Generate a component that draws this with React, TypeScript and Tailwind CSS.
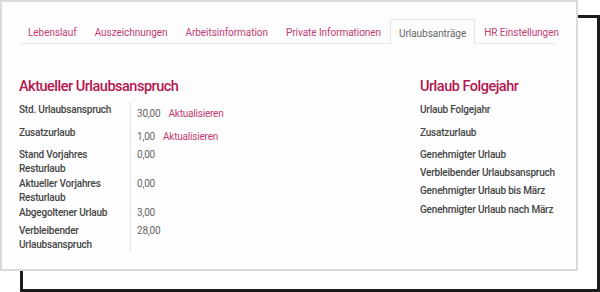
import React from "react";

const tabs = [
  "Lebenslauf",
  "Auszeichnungen",
  "Arbeitsinformation",
  "Private Informationen",
  "Urlaubsanträge",
  "HR Einstellungen",
];

type Row = { label: string[]; value: string; link?: boolean; h: string };

const rows: Row[] = [
  { label: ["Std. Urlaubsanspruch"], value: "30,00", link: true, h: "h-[23px]" },
  { label: ["Zusatzurlaub"], value: "1,00", link: true, h: "h-[22px]" },
  { label: ["Stand Vorjahres", "Resturlaub"], value: "0,00", h: "h-[29px]" },
  { label: ["Aktueller Vorjahres", "Resturlaub"], value: "0,00", h: "h-[29px]" },
  { label: ["Abgegoltener Urlaub"], value: "3,00", h: "h-[18px]" },
  { label: ["Verbleibender", "Urlaubsanspruch"], value: "28,00", h: "h-[29px]" },
];

const nextYear = [
  { label: "Urlaub Folgejahr", h: "h-[23px]" },
  { label: "Zusatzurlaub", h: "h-[22px]" },
  { label: "Genehmigter Urlaub", h: "h-[18px]" },
  { label: "Verbleibender Urlaubsanspruch", h: "h-[18px]" },
  { label: "Genehmigter Urlaub bis März", h: "h-[19px]" },
  { label: "Genehmigter Urlaub nach März", h: "h-[18px]" },
];

const App = () => {
  return (
    <div className="relative w-[600px] h-[292px] bg-white font-['Roboto',sans-serif]">
      {/* black frame behind the card */}
      <div className="absolute left-[20px] top-[15px] w-[580px] h-[277px] border-[3px] border-[#1c1c1c]" />
      <div className="relative w-[578px] h-[271px] border-2 border-[#dadada] bg-[#fdfdfd] pl-[17px] pr-[19px] pt-[17px]">
        <div className="flex h-[25px] border-b border-[#ececec] whitespace-nowrap">
          {tabs.map((tab) => {
            const active = tab === "Urlaubsanträge";
            return (
              <div
                key={tab}
                className={
                  active
                    ? "h-[25px] -mb-px px-[8px] pt-[7px] border border-b-0 border-[#e3e3e3] rounded-t-[3px] bg-[#fdfdfd] text-[10px] leading-[14px] tracking-[-0.05px] text-[#666]"
                    : "h-[25px] px-[9px] pt-[7px] text-[10px] leading-[14px] tracking-[-0.05px] text-[#c23b73]"
                }
              >
                {tab}
              </div>
            );
          })}
        </div>

        <div className="flex mt-[33px] whitespace-nowrap">
          <div className="w-[401px] shrink-0">
            <h2 className="text-[14.5px] leading-[20px] font-medium tracking-[-0.5px] text-[#b3174f] mb-[6px]">
              Aktueller Urlaubsanspruch
            </h2>
            <div className="flex">
              <div className="w-[111px] text-[10px] leading-[14px] font-medium tracking-[-0.2px] text-[#454545]">
                {rows.map((r, i) => (
                  <div key={i} className={r.h}>
                    {r.label.map((l) => (
                      <div key={l}>{l}</div>
                    ))}
                  </div>
                ))}
              </div>
              <div className="w-px bg-[#e6e6e6] -mt-[1px] h-[150px]" />
              <div className="pl-[6px] text-[10px] leading-[14px] tracking-[-0.2px] text-[#666]">
                {rows.map((r, i) => (
                  <div key={i} className={r.h + " flex"}>
                    {r.link ? (
                      <div className="flex items-center h-[22px]">
                        <span>{r.value}</span>
                        <span className="ml-[8px] text-[#c23b73]">Aktualisieren</span>
                      </div>
                    ) : (
                      <span>{r.value}</span>
                    )}
                  </div>
                ))}
              </div>
            </div>
          </div>
          <div>
            <h2 className="text-[14.5px] leading-[20px] font-medium tracking-[-0.5px] text-[#b3174f] mb-[6px]">
              Urlaub Folgejahr
            </h2>
            <div className="text-[10px] leading-[14px] font-medium tracking-[-0.2px] text-[#454545]">
              {nextYear.map((r) => (
                <div key={r.label} className={r.h}>
                  {r.label}
                </div>
              ))}
            </div>
          </div>
        </div>
      </div>
    </div>
  );
};

export default App;
